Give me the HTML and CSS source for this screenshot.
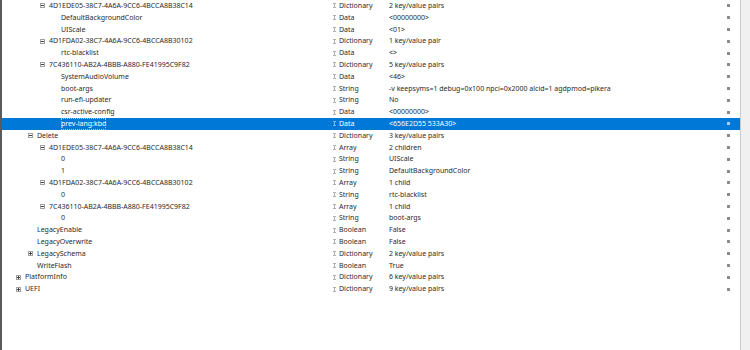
FILE: index.html
```html
<!DOCTYPE html>
<html>
<head>
<meta charset="utf-8">
<link rel="stylesheet" href="styles.css">
</head>
<body>
<div class="window">
  <div class="tree">
    <div class="row"><div class="name l2"><span class="exp minus"></span>4D1EDE05-38C7-4A6A-9CC6-4BCCA8B38C14</div><div class="type"><span class="arr"></span>Dictionary</div><div class="val">2 key/value pairs</div><div class="mk"></div></div>
    <div class="row"><div class="name l3"><span class="exp"></span>DefaultBackgroundColor</div><div class="type"><span class="arr"></span>Data</div><div class="val">&lt;00000000&gt;</div><div class="mk"></div></div>
    <div class="row"><div class="name l3"><span class="exp"></span>UIScale</div><div class="type"><span class="arr"></span>Data</div><div class="val">&lt;01&gt;</div><div class="mk"></div></div>
    <div class="row"><div class="name l2"><span class="exp minus"></span>4D1FDA02-38C7-4A6A-9CC6-4BCCA8B30102</div><div class="type"><span class="arr"></span>Dictionary</div><div class="val">1 key/value pair</div><div class="mk"></div></div>
    <div class="row"><div class="name l3"><span class="exp"></span>rtc-blacklist</div><div class="type"><span class="arr"></span>Data</div><div class="val">&lt;&gt;</div><div class="mk"></div></div>
    <div class="row"><div class="name l2"><span class="exp minus"></span>7C436110-AB2A-4BBB-A880-FE41995C9F82</div><div class="type"><span class="arr"></span>Dictionary</div><div class="val">5 key/value pairs</div><div class="mk"></div></div>
    <div class="row"><div class="name l3"><span class="exp"></span>SystemAudioVolume</div><div class="type"><span class="arr"></span>Data</div><div class="val">&lt;46&gt;</div><div class="mk"></div></div>
    <div class="row"><div class="name l3"><span class="exp"></span>boot-args</div><div class="type"><span class="arr"></span>String</div><div class="val">-v keepsyms=1 debug=0x100 npci=0x2000 alcid=1 agdpmod=pikera</div><div class="mk"></div></div>
    <div class="row"><div class="name l3"><span class="exp"></span>run-efi-updater</div><div class="type"><span class="arr"></span>String</div><div class="val">No</div><div class="mk"></div></div>
    <div class="row"><div class="name l3"><span class="exp"></span>csr-active-config</div><div class="type"><span class="arr"></span>Data</div><div class="val">&lt;00000000&gt;</div><div class="mk"></div></div>
    <div class="row sel"><div class="name l3"><span class="exp"></span><span class="focus">prev-lang:kbd</span></div><div class="type"><span class="arr"></span>Data</div><div class="val">&lt;656E2D55 533A30&gt;</div><div class="mk"></div></div>
    <div class="row"><div class="name l1"><span class="exp minus"></span>Delete</div><div class="type"><span class="arr"></span>Dictionary</div><div class="val">3 key/value pairs</div><div class="mk"></div></div>
    <div class="row"><div class="name l2"><span class="exp minus"></span>4D1EDE05-38C7-4A6A-9CC6-4BCCA8B38C14</div><div class="type"><span class="arr"></span>Array</div><div class="val">2 children</div><div class="mk"></div></div>
    <div class="row"><div class="name l3"><span class="exp"></span>0</div><div class="type"><span class="arr"></span>String</div><div class="val">UIScale</div><div class="mk"></div></div>
    <div class="row"><div class="name l3"><span class="exp"></span>1</div><div class="type"><span class="arr"></span>String</div><div class="val">DefaultBackgroundColor</div><div class="mk"></div></div>
    <div class="row"><div class="name l2"><span class="exp minus"></span>4D1FDA02-38C7-4A6A-9CC6-4BCCA8B30102</div><div class="type"><span class="arr"></span>Array</div><div class="val">1 child</div><div class="mk"></div></div>
    <div class="row"><div class="name l3"><span class="exp"></span>0</div><div class="type"><span class="arr"></span>String</div><div class="val">rtc-blacklist</div><div class="mk"></div></div>
    <div class="row"><div class="name l2"><span class="exp minus"></span>7C436110-AB2A-4BBB-A880-FE41995C9F82</div><div class="type"><span class="arr"></span>Array</div><div class="val">1 child</div><div class="mk"></div></div>
    <div class="row"><div class="name l3"><span class="exp"></span>0</div><div class="type"><span class="arr"></span>String</div><div class="val">boot-args</div><div class="mk"></div></div>
    <div class="row"><div class="name l1"><span class="exp"></span>LegacyEnable</div><div class="type"><span class="arr"></span>Boolean</div><div class="val">False</div><div class="mk"></div></div>
    <div class="row"><div class="name l1"><span class="exp"></span>LegacyOverwrite</div><div class="type"><span class="arr"></span>Boolean</div><div class="val">False</div><div class="mk"></div></div>
    <div class="row"><div class="name l1"><span class="exp plus"></span>LegacySchema</div><div class="type"><span class="arr"></span>Dictionary</div><div class="val">2 key/value pairs</div><div class="mk"></div></div>
    <div class="row"><div class="name l1"><span class="exp"></span>WriteFlash</div><div class="type"><span class="arr"></span>Boolean</div><div class="val">True</div><div class="mk"></div></div>
    <div class="row"><div class="name l0"><span class="exp plus"></span>PlatformInfo</div><div class="type"><span class="arr"></span>Dictionary</div><div class="val">6 key/value pairs</div><div class="mk"></div></div>
    <div class="row"><div class="name l0"><span class="exp plus"></span>UEFI</div><div class="type"><span class="arr"></span>Dictionary</div><div class="val">9 key/value pairs</div><div class="mk"></div></div>
  </div>
  <div class="gutter"></div>
</div>
</body>
</html>
```

FILE: styles.css
```css
html, body {
  margin: 0;
  padding: 0;
  background: #ffffff;
}
body {
  font-family: "Noto Sans", "Open Sans", sans-serif;
  font-size: 7px;
  color: #2a2a2a;
}
.window {
  display: flex;
  width: 750px;
  height: 350px;
  overflow: hidden;
}
.tree {
  width: 738px;
  border-left: 2px solid #5a5a5a;
  background: #ffffff;
}
.gutter {
  width: 9px;
  border-left: 1px solid #c8c8c8;
  background: #f0f0f0;
}
.row {
  display: grid;
  grid-template-columns: 331px 56px 338px 13px;
  height: 11.8px;
  line-height: 11.8px;
  white-space: nowrap;
}
.row.sel {
  background: #0078d7;
  color: #ffffff;
}
.name {
  display: flex;
  align-items: center;
  overflow: hidden;
}
.l0 { padding-left: 14px; }
.l1 { padding-left: 26px; }
.l2 { padding-left: 38px; }
.l3 { padding-left: 50px; }
.exp {
  flex: 0 0 auto;
  width: 5px;
  height: 5px;
  margin-right: 4px;
  position: relative;
  box-sizing: border-box;
}
.exp.minus, .exp.plus {
  border: 1px solid #a0a0a0;
}
.exp.minus::before, .exp.plus::before {
  content: "";
  position: absolute;
  left: 0;
  top: 1px;
  width: 3px;
  height: 1px;
  background: #444;
}
.exp.plus::after {
  content: "";
  position: absolute;
  left: 1px;
  top: 0;
  width: 1px;
  height: 3px;
  background: #444;
}
.focus {
  outline: 1px dotted #9fc8f0;
  outline-offset: -1px;
}
.type {
  display: flex;
  align-items: center;
  overflow: hidden;
}
.arr {
  flex: 0 0 auto;
  width: 3px;
  height: 7px;
  margin-right: 3px;
  background:
    linear-gradient(#b0b0b0, #b0b0b0) 1px 1px / 1px 5px no-repeat,
    linear-gradient(#b0b0b0, #b0b0b0) 0 1px / 3px 1px no-repeat,
    linear-gradient(#b0b0b0, #b0b0b0) 0 5px / 3px 1px no-repeat;
}
.sel .arr {
  background:
    linear-gradient(#7fb6ea, #7fb6ea) 1px 1px / 1px 5px no-repeat,
    linear-gradient(#7fb6ea, #7fb6ea) 0 1px / 3px 1px no-repeat,
    linear-gradient(#7fb6ea, #7fb6ea) 0 5px / 3px 1px no-repeat;
}
.val {
  overflow: hidden;
}
.mk {
  display: flex;
  align-items: center;
}
.mk::before {
  content: "";
  width: 3px;
  height: 3px;
  background: #8a8a8a;
}
.sel .mk::before {
  background: #a8d0f8;
}
```
